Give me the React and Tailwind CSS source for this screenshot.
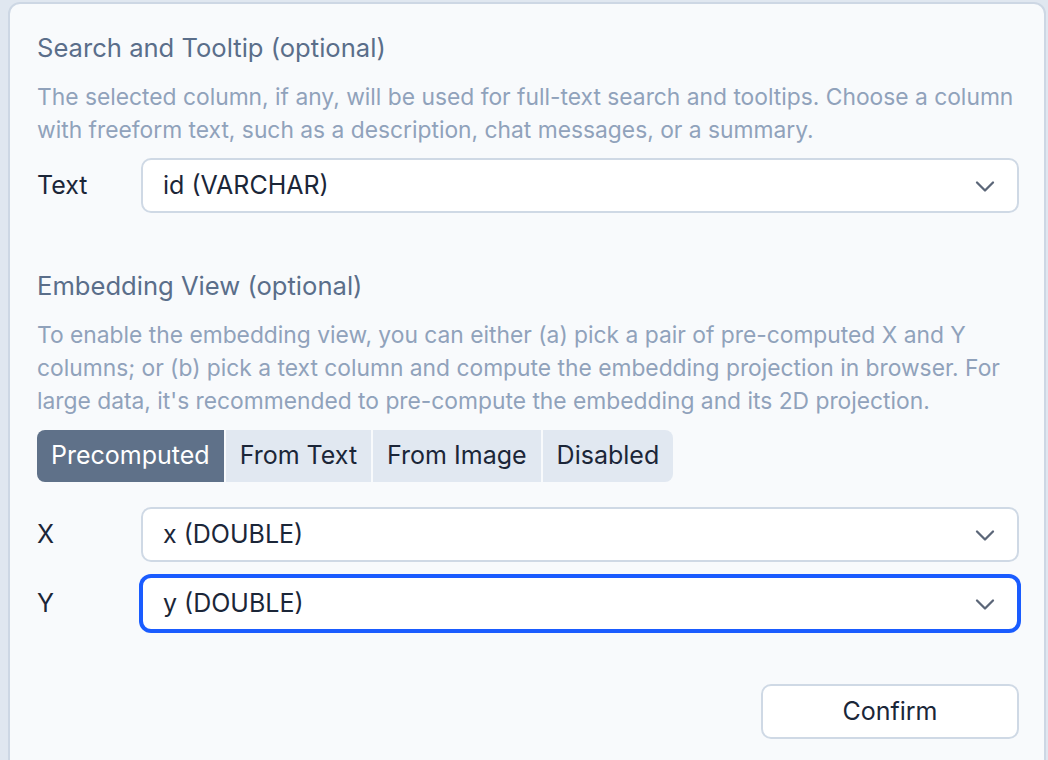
import { useState } from "react";

const Chevron = () => (
    <svg width="24" height="24" viewBox="0 0 24 24" fill="none" stroke="#5b6678" strokeWidth="2.3" strokeLinecap="round" strokeLinejoin="round">
        <path d="M4 8.5l8 8 8-8" />
    </svg>
);

const Select = ({ value, focused }) => (
    <div
        className={
            "flex h-[55px] flex-1 items-center justify-between rounded-[10px] bg-white pl-[20px] pr-[20px] " +
            (focused ? "border-2 border-[#1a5cff] ring-2 ring-[#1a5cff]" : "border-2 border-[#cfd9e5]")
        }
    >
        <span className="text-[25px] text-[#1b2638]">{value}</span>
        <Chevron />
    </div>
);

const Row = ({ label, children }) => (
    <div className="flex items-center">
        <div className="w-[104px] text-[25px] text-[#1b2638]">{label}</div>
        {children}
    </div>
);

const App = () => {
    const [mode, setMode] = useState("Precomputed");
    const modes = ["Precomputed", "From Text", "From Image", "Disabled"];

    return (
        <div className="h-[760px] overflow-hidden bg-[#e0e7f0] pl-[8px] pt-[2px] font-['Inter',sans-serif]">
            <div className="h-[800px] w-[1038px] rounded-[12px] border-2 border-[#cdd7e4] bg-[#f8fafc] pl-[27px] pr-[25px] pt-[29px]">
                {/* Search and Tooltip */}
                <h2 className="text-[25.6px] leading-[30px] text-[#5a6e8a]">Search and Tooltip (optional)</h2>
                <p className="mt-[17px] whitespace-nowrap text-[22.8px] leading-[33px] text-[#90a2bb]">
                    The selected column, if any, will be used for full-text search and tooltips. Choose a column
                    <br />
                    with freeform text, such as a description, chat messages, or a summary.
                </p>
                <div className="mt-[12px]">
                    <Row label="Text">
                        <Select value="id (VARCHAR)" />
                    </Row>
                </div>

                {/* Embedding View */}
                <h2 className="mt-[58px] text-[25.6px] leading-[30px] text-[#5a6e8a]">Embedding View (optional)</h2>
                <p className="mt-[17px] whitespace-nowrap text-[22.8px] leading-[33px] text-[#90a2bb]">
                    To enable the embedding view, you can either (a) pick a pair of pre-computed X and Y
                    <br />
                    columns; or (b) pick a text column and compute the embedding projection in browser. For
                    <br />
                    large data, it's recommended to pre-compute the embedding and its 2D projection.
                </p>
                <div className="mt-[13px] flex w-fit gap-[2px] overflow-hidden rounded-[8px] bg-[#f8fafc]">
                    {modes.map((m) => (
                        <button
                            key={m}
                            onClick={() => setMode(m)}
                            className={
                                "h-[52px] px-[14px] text-[25px] " +
                                (mode === m ? "bg-[#5f7189] text-white" : "bg-[#e1e8f1] text-[#1b2638]")
                            }
                        >
                            {m}
                        </button>
                    ))}
                </div>

                <div className="mt-[25px] flex flex-col gap-[14px]">
                    <Row label="X">
                        <Select value="x (DOUBLE)" />
                    </Row>
                    <Row label="Y">
                        <Select value="y (DOUBLE)" focused />
                    </Row>
                </div>

                <div className="mt-[53px] flex justify-end">
                    <button className="h-[55px] w-[258px] rounded-[10px] border-2 border-[#cfd9e5] bg-white text-[25px] text-[#1b2638]">
                        Confirm
                    </button>
                </div>
            </div>
        </div>
    );
};

export default App;
